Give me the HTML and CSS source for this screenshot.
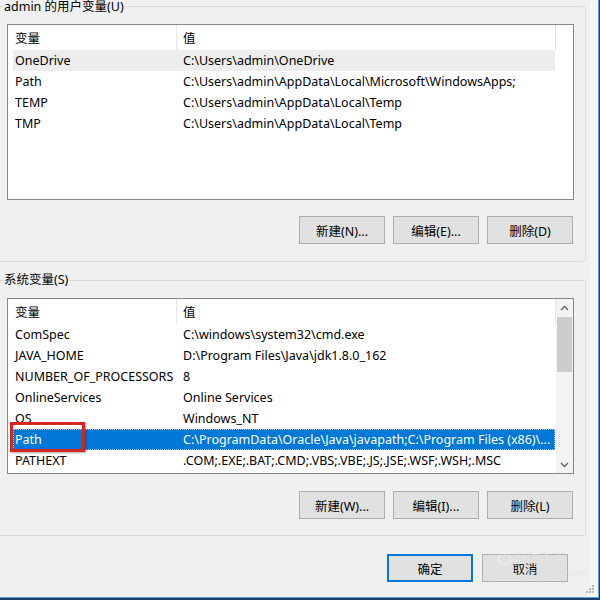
FILE: index.html
```html
<!DOCTYPE html>
<html lang="zh-CN">
<head>
<meta charset="utf-8">
<title>环境变量</title>
<link rel="stylesheet" href="styles.css">
</head>
<body>
<div class="window">
  <div class="dialog">
    <fieldset class="group group-user">
      <legend>admin 的用户变量(U)</legend>
      <div class="list">
        <div class="list-main">
          <div class="list-head">
            <span class="hcell hcell-name">变量</span>
            <span class="hcell hcell-value">值</span>
          </div>
          <div class="row row-hover"><span class="cell cell-name">OneDrive</span><span class="cell">C:\Users\admin\OneDrive</span></div>
          <div class="row"><span class="cell cell-name">Path</span><span class="cell">C:\Users\admin\AppData\Local\Microsoft\WindowsApps;</span></div>
          <div class="row"><span class="cell cell-name">TEMP</span><span class="cell">C:\Users\admin\AppData\Local\Temp</span></div>
          <div class="row"><span class="cell cell-name">TMP</span><span class="cell">C:\Users\admin\AppData\Local\Temp</span></div>
        </div>
      </div>
      <div class="btn-row">
        <button class="btn">新建(N)...</button>
        <button class="btn">编辑(E)...</button>
        <button class="btn">删除(D)</button>
      </div>
    </fieldset>

    <fieldset class="group group-sys">
      <legend>系统变量(S)</legend>
      <div class="list">
        <div class="list-main">
          <div class="list-head">
            <span class="hcell hcell-name">变量</span>
            <span class="hcell hcell-value">值</span>
          </div>
          <div class="row"><span class="cell cell-name">ComSpec</span><span class="cell">C:\windows\system32\cmd.exe</span></div>
          <div class="row"><span class="cell cell-name">JAVA_HOME</span><span class="cell">D:\Program Files\Java\jdk1.8.0_162</span></div>
          <div class="row"><span class="cell cell-name">NUMBER_OF_PROCESSORS</span><span class="cell">8</span></div>
          <div class="row"><span class="cell cell-name">OnlineServices</span><span class="cell">Online Services</span></div>
          <div class="row"><span class="cell cell-name">OS</span><span class="cell">Windows_NT</span></div>
          <div class="row row-selected"><span class="cell cell-name">Path</span><span class="cell">C:\ProgramData\Oracle\Java\javapath;C:\Program Files (x86)\...</span></div>
          <div class="row"><span class="cell cell-name">PATHEXT</span><span class="cell">.COM;.EXE;.BAT;.CMD;.VBS;.VBE;.JS;.JSE;.WSF;.WSH;.MSC</span></div>
        </div>
        <div class="scrollbar">
          <div class="sb-btn">
            <svg width="9" height="6" viewBox="0 0 9 6"><path d="M1 5 L4.5 1.5 L8 5" fill="none" stroke="#606060" stroke-width="1.3"/></svg>
          </div>
          <div class="sb-track"><div class="sb-thumb"></div></div>
          <div class="sb-btn">
            <svg width="9" height="6" viewBox="0 0 9 6"><path d="M1 1 L4.5 4.5 L8 1" fill="none" stroke="#606060" stroke-width="1.3"/></svg>
          </div>
        </div>
        <div class="callout"></div>
      </div>
      <div class="btn-row">
        <button class="btn">新建(W)...</button>
        <button class="btn">编辑(I)...</button>
        <button class="btn">删除(L)</button>
      </div>
    </fieldset>

    <div class="footer">
      <button class="btn btn-default">确定</button>
      <button class="btn">取消</button>
    </div>
  </div>
  <div class="watermark">
    <div class="wm-top"><span class="wm-logo">S</span><span class="wm-name">搜狗指南</span></div>
    <div class="wm-url">zhinan.sogou.com</div>
  </div>
  <svg class="grip" width="8" height="8" viewBox="0 0 8 8">
    <rect x="6" y="0" width="2" height="2" fill="#b8b8b8"/>
    <rect x="3" y="3" width="2" height="2" fill="#b8b8b8"/>
    <rect x="6" y="3" width="2" height="2" fill="#b8b8b8"/>
    <rect x="0" y="6" width="2" height="2" fill="#b8b8b8"/>
    <rect x="3" y="6" width="2" height="2" fill="#b8b8b8"/>
    <rect x="6" y="6" width="2" height="2" fill="#b8b8b8"/>
  </svg>
</div>
</body>
</html>
```

FILE: styles.css
```css
* { box-sizing: border-box; }

html, body {
  margin: 0;
  padding: 0;
  background: #1c3c6a;
  width: 600px;
  height: 600px;
  overflow: hidden;
}

body {
  font-family: "Noto Sans", "Noto Sans CJK SC", sans-serif;
  font-size: 12.5px;
  color: #000;
}

.window {
  position: relative;
  width: 599px;
  height: 598px;
  background: linear-gradient(to right, #f0f0f0 590px, #f6f6f6 590px);
  border-right: 1px solid #5d9fe2;
  border-bottom: 1px solid #5d9fe2;
  overflow: hidden;
}

.dialog {
  width: 590px;
  display: flex;
  flex-direction: column;
}

.group {
  margin: 0 0 0 -5px;
  width: 591px;
  min-width: 0;
  padding: 0 11px 17px 11px;
  border: 1px solid #dcdcdc;
  border-radius: 3px;
}

.group legend {
  margin-left: -3px;
  padding: 0 1px 0 0;
  line-height: 12px;
  height: 12px;
  white-space: nowrap;
}

.group-user legend {
  line-height: 13px;
}

.group-sys {
  margin-top: 12px;
  padding-bottom: 16px;
}

.list {
  position: relative;
  margin-top: 12px;
  height: 176px;
  border: 1px solid #828790;
  background: #fff;
  display: flex;
}

.list-main {
  flex: 1;
  min-width: 0;
  display: flex;
  flex-direction: column;
}

.list-head {
  display: flex;
  height: 25px;
  align-items: stretch;
  flex: none;
}

.hcell {
  display: flex;
  align-items: center;
  border-right: 1px solid #e5e5e5;
}

.hcell-name {
  width: 169px;
  padding-left: 7px;
}

.hcell-value {
  width: 379px;
  padding-left: 6px;
}

.row {
  display: flex;
  margin-left: 5px;
  width: 542px;
  height: 21px;
  line-height: 21px;
  flex: none;
  white-space: nowrap;
}

.cell {
  padding-left: 2px;
  overflow: hidden;
  flex: 1;
  min-width: 0;
}

.cell-name {
  flex: none;
  width: 168px;
}

.row-hover {
  background: #ededed;
}

.row-selected {
  background: #0078d7;
  color: #fff;
  outline: 1px dotted #9cc9f0;
  outline-offset: -1px;
}

.scrollbar {
  width: 17px;
  flex: none;
  display: flex;
  flex-direction: column;
  background: #f3f3f3;
}

.sb-btn {
  height: 17px;
  flex: none;
  display: flex;
  align-items: center;
  justify-content: center;
}

.sb-track {
  flex: 1;
  padding: 1px 1px 0 1px;
}

.sb-thumb {
  height: 55px;
  background: #cdcdcd;
}

.callout {
  position: absolute;
  left: 2px;
  top: 123px;
  width: 75px;
  height: 30px;
  border: 3px solid #d8251d;
  box-shadow: 1px 1px 2px rgba(0, 0, 0, 0.35);
}

.btn-row {
  display: flex;
  justify-content: flex-end;
  gap: 8px;
  margin-top: 16px;
  padding-right: 1px;
}

.group-sys .btn-row {
  margin-top: 17px;
}

.btn {
  width: 86px;
  height: 28px;
  margin: 0;
  padding: 0;
  background: #e1e1e1;
  border: 1px solid #adadad;
  border-radius: 0;
  font: inherit;
  color: #000;
}

.btn-default {
  border: 2px solid #0078d7;
}

.footer {
  display: flex;
  justify-content: flex-end;
  gap: 9px;
  margin-top: 18px;
  padding-right: 22px;
}

.watermark {
  position: absolute;
  left: 498px;
  top: 551px;
  width: 95px;
  color: rgba(255, 255, 255, 0.55);
  text-shadow: 0 0 1px rgba(0, 0, 0, 0.12);
  pointer-events: none;
}

.wm-top {
  display: flex;
  align-items: center;
  height: 15px;
}

.wm-logo {
  display: inline-block;
  width: 13px;
  height: 13px;
  border-radius: 50%;
  border: 1px solid rgba(255, 255, 255, 0.6);
  font-size: 10px;
  line-height: 11px;
  text-align: center;
  margin-right: 2px;
}

.wm-name {
  font-size: 13px;
  line-height: 15px;
}

.wm-url {
  font-size: 10px;
  line-height: 12px;
  margin-left: 3px;
}

.grip {
  position: absolute;
  right: 4px;
  bottom: 4px;
}
```
